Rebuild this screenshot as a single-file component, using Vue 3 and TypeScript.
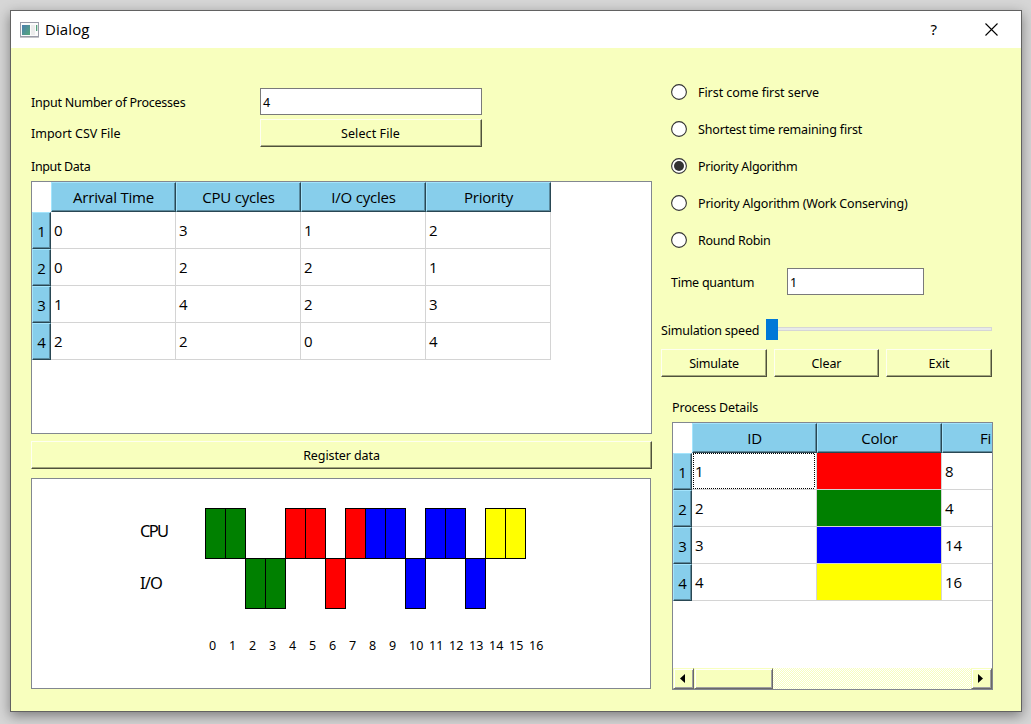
<script setup lang="ts">
import { ref } from 'vue'

type Lane = 'cpu' | 'io'
interface Slot { lane: Lane; color: string }

const green = '#008000'
const red = '#ff0000'
const blue = '#0000ff'
const yellow = '#ffff00'

const inputColumns = ['Arrival Time', 'CPU cycles', 'I/O cycles', 'Priority']
const inputRows = [
  [0, 3, 1, 2],
  [0, 2, 2, 1],
  [1, 4, 2, 3],
  [2, 2, 0, 4],
]

const algorithms = [
  'First come first serve',
  'Shortest time remaining first',
  'Priority Algorithm',
  'Priority Algorithm (Work Conserving)',
  'Round Robin',
]
const selected = ref(2)

const details = [
  { id: 1, cls: 'red', finish: 8 },
  { id: 2, cls: 'green', finish: 4 },
  { id: 3, cls: 'blue', finish: 14 },
  { id: 4, cls: 'yellow', finish: 16 },
]

const slots: Slot[] = [
  { lane: 'cpu', color: green }, { lane: 'cpu', color: green },
  { lane: 'io', color: green }, { lane: 'io', color: green },
  { lane: 'cpu', color: red }, { lane: 'cpu', color: red },
  { lane: 'io', color: red }, { lane: 'cpu', color: red },
  { lane: 'cpu', color: blue }, { lane: 'cpu', color: blue },
  { lane: 'io', color: blue }, { lane: 'cpu', color: blue },
  { lane: 'cpu', color: blue }, { lane: 'io', color: blue },
  { lane: 'cpu', color: yellow }, { lane: 'cpu', color: yellow },
]
const ticks = Array.from({ length: 17 }, (_, i) => i)
</script>

<template>
  <div class="desktop">
    <div class="window">
      <header class="titlebar">
        <svg class="app-icon" width="19" height="16" viewBox="0 0 19 16">
          <defs>
            <linearGradient id="pane" x1="0" y1="0" x2="1" y2="1">
              <stop offset="0" stop-color="#4a7db0" />
              <stop offset="1" stop-color="#55a878" />
            </linearGradient>
          </defs>
          <rect x="0.5" y="0.5" width="18" height="14" fill="#fbfbfb" stroke="#9a9ca8" />
          <rect x="2" y="3" width="8" height="10" fill="url(#pane)" />
          <rect x="11" y="3" width="4" height="10" fill="#ececec" />
          <rect x="16" y="3" width="1.3" height="6" fill="#55a07c" />
          <path d="M0 15.5H19" stroke="#c4c4c8" />
        </svg>
        <span class="title">Dialog</span>
        <span class="help">?</span>
        <svg class="close" width="13" height="13" viewBox="0 0 13 13">
          <path d="M0.5 0.5L12.5 12.5M12.5 0.5L0.5 12.5" stroke="#000" stroke-width="1.1" fill="none" />
        </svg>
      </header>

      <main class="body">
        <section class="left">
          <div class="row first">
            <span class="lbl wide">Input Number of Processes</span>
            <div class="field count">4</div>
          </div>
          <div class="row second">
            <span class="lbl csv">Import CSV File</span>
            <div class="btn select">Select File</div>
          </div>
          <div class="lbl heading">Input Data</div>
          <div class="table input-table">
            <div class="tr head">
              <div class="corner"></div>
              <div v-for="c in inputColumns" :key="c" class="th">{{ c }}</div>
            </div>
            <div v-for="(r, i) in inputRows" :key="i" class="tr">
              <div class="rh">{{ i + 1 }}</div>
              <div v-for="(v, j) in r" :key="j" class="td">{{ v }}</div>
            </div>
          </div>
          <div class="btn register">Register data</div>
          <div class="chart">
            <svg width="618" height="209" viewBox="32 479 618 209">
              <text class="lane" x="140" y="537" textLength="29">CPU</text>
              <text class="lane" x="140" y="589" textLength="23">I/O</text>
              <rect
                v-for="(s, i) in slots"
                :key="i"
                :x="205.5 + i * 20"
                :y="s.lane === 'cpu' ? 508.5 : 558.5"
                width="20"
                height="50"
                :fill="s.color"
                stroke="#000"
              />
              <text v-for="n in ticks" :key="n" class="tick" :x="209 + n * 20" y="650">{{ n }}</text>
            </svg>
          </div>
        </section>

        <section class="right">
          <div class="radios">
            <div v-for="(a, i) in algorithms" :key="a" class="radio" @click="selected = i">
              <svg width="16" height="16" viewBox="0 0 16 16">
                <circle cx="8" cy="8" r="7.4" fill="#fff" stroke="#333" stroke-width="1.1" />
                <circle v-if="selected === i" cx="8" cy="8" r="5" fill="#333" />
              </svg>
              <span class="lbl" :class="'alg' + i">{{ a }}</span>
            </div>
          </div>
          <div class="quantum">
            <span class="lbl">Time quantum</span>
            <div class="field">1</div>
          </div>
          <div class="speed">
            <span class="lbl">Simulation speed</span>
            <div class="thumb"></div>
            <div class="groove"></div>
          </div>
          <div class="actions">
            <div class="btn simulate">Simulate</div>
            <div class="btn">Clear</div>
            <div class="btn">Exit</div>
          </div>
          <div class="lbl details-label">Process Details</div>
          <div class="table details">
            <div class="tr head">
              <div class="corner"></div>
              <div class="th">ID</div>
              <div class="th">Color</div>
              <div class="th cut">Fi</div>
            </div>
            <div v-for="(d, i) in details" :key="d.id" class="tr">
              <div class="rh">{{ i + 1 }}</div>
              <div class="td" :class="{ focused: i === 0 }">{{ d.id }}</div>
              <div class="td" :class="d.cls"></div>
              <div class="td">{{ d.finish }}</div>
            </div>
            <div class="scroll">
              <div class="sb arrow"><svg width="5" height="9" viewBox="0 0 5 9"><path d="M5 0V9L0 4.5Z" /></svg></div>
              <div class="sb bar"></div>
              <svg class="track" width="198" height="21">
                <defs>
                  <pattern id="dither" width="2" height="2" patternUnits="userSpaceOnUse">
                    <path d="M0 0h2v2h-2z" fill="#fff" />
                    <path d="M0 0h1v1h-1zM1 1h1v1h-1z" fill="#f8ffbe" shape-rendering="crispEdges" />
                  </pattern>
                </defs>
                <rect width="198" height="21" fill="url(#dither)" />
              </svg>
              <div class="sb arrow"><svg width="5" height="9" viewBox="0 0 5 9"><path d="M0 0V9L5 4.5Z" /></svg></div>
            </div>
          </div>
        </section>
      </main>
    </div>
  </div>
</template>

<style>
body { margin: 0; overflow: hidden; }
</style>

<style scoped>
* { box-sizing: border-box; }
.desktop {
  width: 1031px;
  height: 724px;
  padding: 10px 0 0 10px;
  overflow: hidden;
  background: #d6d6d6;
  font-family: "Noto Sans", "DejaVu Sans", sans-serif;
  font-size: 12.5px;
  color: #000;
  cursor: default;
}
.window {
  width: 1012px;
  height: 702px;
  border: 1px solid #626262;
  background: #f8ffbe;
  box-shadow: 0 4px 12px rgba(0, 0, 0, 0.42);
}
.titlebar {
  height: 37px;
  background: #fff;
  display: flex;
  align-items: center;
  padding: 0 23px 0 9px;
}
.title { font-size: 15px; line-height: 20px; margin: -1px 0 0 6px; flex: 1; font-family: "Open Sans", sans-serif; letter-spacing: 0.1px; }
.help { font-size: 15px; margin: -2px 48px 0 0; }
.close { display: block; }
.body { display: flex; gap: 9px; padding-left: 20px; }
.left { width: 621px; padding-top: 40px; }
.right { width: 332px; padding-top: 26px; }
.lbl { white-space: nowrap; line-height: 18px; letter-spacing: -0.15px; }
.row { display: flex; align-items: center; }
.row .lbl { width: 229px; padding-top: 1px; }
.row .wide { letter-spacing: -0.24px; padding-top: 3px; }
.row .csv { letter-spacing: 0; }
.first { height: 27px; }
.second { height: 28px; margin-top: 4px; }
.field {
  height: 27px;
  border: 1px solid #7a7a7a;
  background: #fff;
  padding: 1px 0 0 2px;
  line-height: 25px;
}
.count { width: 222px; }
.select { width: 222px; letter-spacing: 0.1px; }
.btn {
  height: 28px;
  border: 1px solid #fefff0;
  border-right-color: #50523c;
  border-bottom-color: #50523c;
  box-shadow: inset -1px -1px 0 #a4a87c;
  text-align: center;
  line-height: 27px;
  letter-spacing: -0.1px;
  white-space: nowrap;
}
.select { letter-spacing: 0.1px; padding-right: 1px; }
.heading { height: 34px; padding-top: 11px; letter-spacing: -0.35px; }
.table {
  border: 1px solid #828790;
  background: #fff;
  overflow: hidden;
  font-family: "Open Sans", "Noto Sans", sans-serif;
  font-size: 15px;
  letter-spacing: -0.2px;
}
.input-table { height: 253px; }
.tr { display: flex; height: 37px; }
.tr.head { height: 30px; }
.corner, .rh { width: 19px; flex: none; }
.th, .td { width: 125px; flex: none; }
.th, .rh {
  background: #87ceeb;
  border: 1px solid #a4e4fc;
  border-right-color: #294753;
  border-bottom-color: #294753;
  box-shadow: inset -1px -1px 0 #5a8a9e;
  text-align: center;
  white-space: nowrap;
}
.th { line-height: 28px; }
.rh { line-height: 36px; }
.td {
  border-right: 1px solid #d4d4d4;
  border-bottom: 1px solid #d4d4d4;
  padding-left: 3px;
  line-height: 36px;
}
.td.focused {
  background-image:
    repeating-linear-gradient(90deg, #000 0 1px, #fff 1px 2px),
    repeating-linear-gradient(90deg, #000 0 1px, #fff 1px 2px),
    repeating-linear-gradient(0deg, #000 0 1px, #fff 1px 2px),
    repeating-linear-gradient(0deg, #000 0 1px, #fff 1px 2px);
  background-repeat: no-repeat;
  background-size: 122px 1px, 122px 1px, 1px 36px, 1px 36px;
  background-position: 1px 0, 1px 35px, 1px 0, 122px 0;
}
.td.red { background: #f00; }
.td.green { background: #008000; }
.td.blue { background: #00f; }
.td.yellow { background: #ff0; }
.th.cut { text-align: left; padding-left: 37px; }
.register { margin-top: 7px; }
.chart { width: 620px; height: 211px; margin-top: 9px; border: 1px solid #828790; background: #fff; }
.chart svg { display: block; }
.lane { font-size: 16.5px; }
.tick { font-size: 12.5px; }
.radios { padding-left: 10px; }
.radio { height: 37px; display: flex; align-items: center; gap: 11px; }
.radio svg { margin-bottom: 1px; }
.radio .lbl { padding-top: 1px; }
.radio .alg0 { letter-spacing: -0.05px; }
.radio .alg1 { letter-spacing: -0.17px; }
.radio .alg2 { letter-spacing: -0.3px; }
.radio .alg3 { letter-spacing: -0.18px; }
.radio .alg4 { letter-spacing: -0.3px; }
.quantum { display: flex; align-items: center; height: 27px; margin-top: 9px; padding-left: 10px; }
.quantum .lbl { width: 116px; padding-top: 2px; letter-spacing: -0.25px; }
.quantum .field { width: 137px; }
.speed { display: flex; align-items: center; height: 21px; margin-top: 24px; }
.speed .lbl { width: 105px; padding-top: 2px; letter-spacing: -0.2px; }
.thumb { width: 12px; height: 21px; background: #0078d7; }
.groove { width: 214px; height: 4px; border: 1px solid #d6d6d6; border-left: 0; background: #e7eaea; margin-bottom: 1px; }
.actions { display: grid; grid-template-columns: 106px 105px 106px; gap: 7px; margin-top: 9px; }
.actions .simulate { letter-spacing: -0.2px; }
.details-label { height: 45px; padding: 22px 0 0 11px; }
.details { width: 321px; height: 268px; margin-left: 11px; display: flex; flex-direction: column; }
.details .tr { flex: none; }
.scroll { display: flex; height: 21px; margin-top: auto; }
.sb {
  background: #f8ffbe;
  border: 1px solid #f8ffbe;
  border-right-color: #696969;
  border-bottom-color: #696969;
  box-shadow: inset 1px 1px 0 #fff, inset -1px -1px 0 #a0a0a0;
  flex: none;
}
.arrow { width: 21px; display: flex; align-items: center; justify-content: center; padding-right: 2px; padding-bottom: 1px; }
.bar { width: 79px; }
.track { display: block; flex: none; }
</style>
